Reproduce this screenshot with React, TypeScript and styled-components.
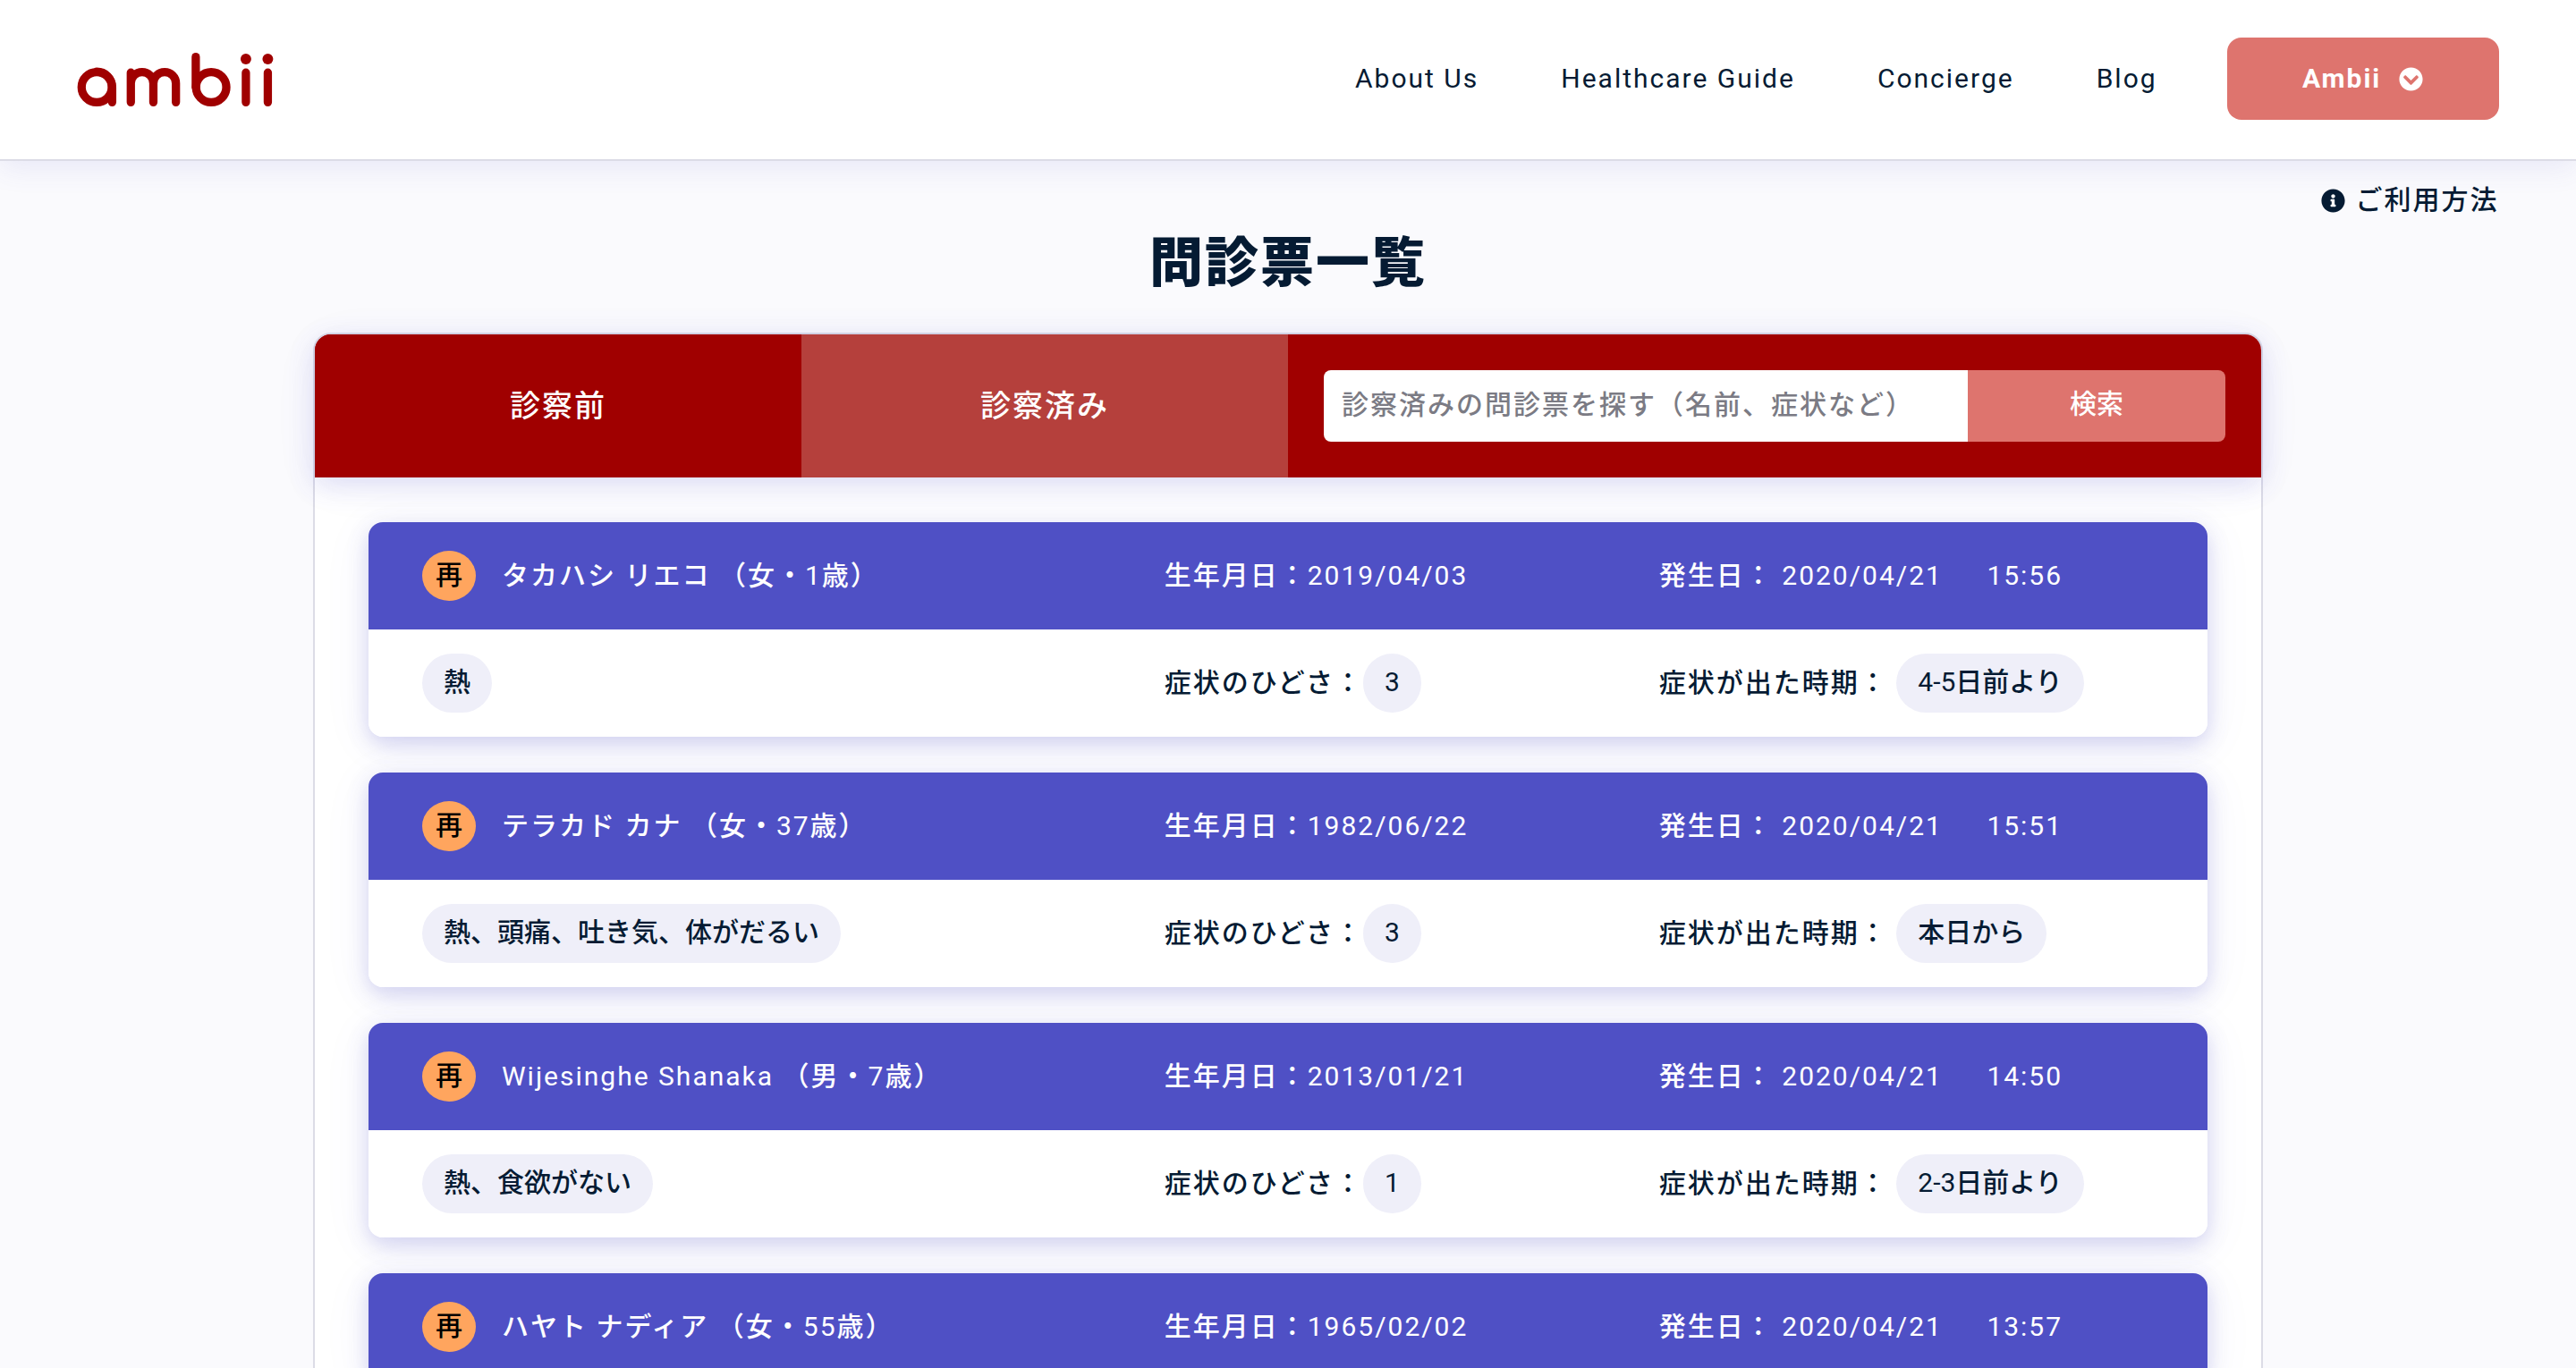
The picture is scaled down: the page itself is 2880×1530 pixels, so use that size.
import React from "react";
import styled, { createGlobalStyle } from "styled-components";
import { FaChevronCircleDown, FaInfoCircle } from "react-icons/fa";

const color = {
  ink: "#051b33",
  crimson: "#a00000",
  crimsonSoft: "#b5403c",
  coral: "#de746e",
  violet: "#4f50c5",
  orange: "#ffa55e",
  lavender: "#efeff9",
  page: "#fafafd",
  line: "#dcdce6",
};

const bodyFont = `Roboto, "Noto Sans CJK JP Medium", "Noto Sans CJK JP", sans-serif`;
const displayFont = `Roboto, "Noto Sans CJK JP", sans-serif`;

const softShadow = "0 8px 30px rgba(79, 80, 197, 0.18), 0 8px 60px rgba(79, 80, 197, 0.04)";
const cardShadow = "0 8px 24px rgba(79, 80, 197, 0.24), 0 8px 60px rgba(79, 80, 197, 0.06)";

const GlobalStyle = createGlobalStyle`
  *, *::before, *::after { box-sizing: border-box; }
  body {
    margin: 0;
    background: ${color.page};
    color: ${color.ink};
    font-family: ${bodyFont};
    font-size: 30px;
    line-height: 44px;
    letter-spacing: 2px;
  }
  button, input { font: inherit; letter-spacing: inherit; }
  a { color: inherit; text-decoration: none; }
`;

const Page = styled.div`
  height: 100vh;
  overflow: hidden;
`;

const Header = styled.header`
  display: flex;
  align-items: center;
  justify-content: space-between;
  height: 180px;
  padding: 0 3%;
  background: #fff;
  border-bottom: 2px solid ${color.line};
  box-shadow: 0 8px 30px rgba(79, 80, 197, 0.1);
`;

const Logo = styled.svg`
  display: block;
  width: 220px;
  height: 60px;
`;

const Nav = styled.nav`
  display: flex;
  align-items: center;
  gap: 92px;
  padding-bottom: 2px;
`;

const AccountButton = styled.button`
  display: flex;
  align-items: center;
  justify-content: center;
  gap: 20px;
  width: 304px;
  height: 92px;
  margin-left: -14px;
  border: 0;
  border-radius: 16px;
  background: ${color.coral};
  color: #fff;
  font-weight: 700;
  svg { width: 27px; height: 27px; }
`;

const Main = styled.main`
  padding: 22px 3% 0;
`;

const HelpLink = styled.a`
  display: flex;
  align-items: center;
  justify-content: flex-end;
  gap: 12px;
  svg { width: 27px; height: 27px; }
`;

const Title = styled.h1`
  margin: 4px 0 0;
  font-family: ${displayFont};
  font-size: 60px;
  line-height: 90px;
  font-weight: 900;
  text-align: center;
`;

const Panel = styled.section`
  max-width: 2180px;
  margin: 32px auto 0;
  border: 2px solid ${color.line};
  border-radius: 20px;
  background: #fff;
`;

const Toolbar = styled.div`
  display: grid;
  grid-template-columns: 1fr 1fr 2fr;
  height: 160px;
  border-radius: 18px 18px 0 0;
  background: ${color.crimson};
  box-shadow: ${softShadow};
`;

const Tab = styled.button<{ $active?: boolean }>`
  border: 0;
  border-radius: ${(p) => (p.$active ? "18px 0 0 0" : "0")};
  background: ${(p) => (p.$active ? color.crimson : color.crimsonSoft)};
  color: #fff;
  font-family: ${displayFont};
  font-size: 34px;
  font-weight: 500;
`;

const Search = styled.form`
  display: grid;
  grid-template-columns: 5fr 2fr;
  padding: 40px;
`;

const SearchInput = styled.input`
  min-width: 0;
  padding: 0 20px 2px;
  border: 0;
  border-radius: 8px 0 0 8px;
  background: #fff;
  color: ${color.ink};
  &::placeholder { color: #7b7b84; opacity: 1; }
`;

const SearchButton = styled.button`
  padding: 0 0 4px;
  border: 0;
  border-radius: 0 8px 8px 0;
  background: ${color.coral};
  color: #fff;
  font-family: ${displayFont};
  font-weight: 500;
  letter-spacing: 0;
`;

const RecordList = styled.ul`
  display: grid;
  gap: 40px;
  margin: 0;
  padding: 50px 60px;
  list-style: none;
`;

const Record = styled.li`
  border-radius: 16px;
  background: #fff;
  box-shadow: ${cardShadow};
`;

const RecordRow = styled.div<{ $head?: boolean }>`
  display: grid;
  grid-template-columns: 3fr 2fr 2fr;
  align-items: center;
  height: 120px;
  padding: 0 60px;
  border-radius: ${(p) => (p.$head ? "16px 16px 0 0" : "0 0 16px 16px")};
  background: ${(p) => (p.$head ? color.violet : "#fff")};
  color: ${(p) => (p.$head ? "#fff" : color.ink)};
`;

const Cell = styled.div`
  display: flex;
  align-items: center;
  white-space: pre;
`;

const Revisit = styled.span`
  width: 60px;
  height: 56px;
  margin-right: 29px;
  border-radius: 50%;
  background: ${color.orange};
  color: #000;
  line-height: 54px;
  letter-spacing: 0;
  text-align: center;
`;

const Pill = styled.span`
  height: 66px;
  padding: 0 24px;
  border-radius: 40px;
  background: ${color.lavender};
  line-height: 64px;
  letter-spacing: 0;
`;

const Time = styled.time`
  margin-left: 40px;
`;

interface Visit {
  name: string;
  birth: string;
  date: string;
  time: string;
  symptoms?: string;
  severity?: number;
  since?: string;
}

const visits: Visit[] = [
  { name: "タカハシ リエコ （女・1歳）", birth: "2019/04/03", date: "2020/04/21", time: "15:56", symptoms: "熱", severity: 3, since: "4-5日前より" },
  { name: "テラカド カナ （女・37歳）", birth: "1982/06/22", date: "2020/04/21", time: "15:51", symptoms: "熱、頭痛、吐き気、体がだるい", severity: 3, since: "本日から" },
  { name: "Wijesinghe Shanaka （男・7歳）", birth: "2013/01/21", date: "2020/04/21", time: "14:50", symptoms: "熱、食欲がない", severity: 1, since: "2-3日前より" },
  { name: "ハヤト ナディア （女・55歳）", birth: "1965/02/02", date: "2020/04/21", time: "13:57" },
];

const links = ["About Us", "Healthcare Guide", "Concierge", "Blog"];

function AmbiiLogo() {
  return (
    <Logo viewBox="78 87 660 181" role="img" aria-label="ambii" fill="none" stroke={color.crimson} strokeWidth="28" strokeLinecap="round">
      <circle cx="143" cy="203" r="51" />
      <path d="M195 254V203A52 52 0 0 0 143 151" />
      <path d="M258 254V154M258 190a38 38 0 0 1 76 0V254M334 190a38 38 0 0 1 76 0V254" />
      <path d="M477 101V203" />
      <circle cx="529" cy="203" r="51" />
      <path d="M646 154V254M720 154V254" />
      <g fill={color.crimson} stroke="none">
        <circle cx="646" cy="108" r="18" />
        <circle cx="720" cy="108" r="18" />
      </g>
    </Logo>
  );
}

function VisitRecord({ visit }: { visit: Visit }) {
  return (
    <Record>
      <RecordRow $head>
        <Cell>
          <Revisit>再</Revisit>
          {visit.name}
        </Cell>
        <Cell>生年月日：{visit.birth}</Cell>
        <Cell>
          {`発生日： ${visit.date} `}
          <Time>{visit.time}</Time>
        </Cell>
      </RecordRow>
      {visit.symptoms && (
        <RecordRow>
          <Cell>
            <Pill>{visit.symptoms}</Pill>
          </Cell>
          <Cell>
            症状のひどさ：<Pill>{visit.severity}</Pill>
          </Cell>
          <Cell>
            {"症状が出た時期： "}
            <Pill>{visit.since}</Pill>
          </Cell>
        </RecordRow>
      )}
    </Record>
  );
}

export default function App() {
  return (
    <Page>
      <GlobalStyle />
      <Header>
        <a href="#top">
          <AmbiiLogo />
        </a>
        <Nav>
          {links.map((label) => (
            <a key={label} href="#top">
              {label}
            </a>
          ))}
          <AccountButton type="button">
            Ambii
            <FaChevronCircleDown aria-hidden />
          </AccountButton>
        </Nav>
      </Header>
      <Main>
        <HelpLink href="#help">
          <FaInfoCircle aria-hidden />
          ご利用方法
        </HelpLink>
        <Title>問診票一覧</Title>
        <Panel>
          <Toolbar>
            <Tab type="button" $active>
              診察前
            </Tab>
            <Tab type="button">診察済み</Tab>
            <Search>
              <SearchInput type="text" aria-label="診察済みの問診票を探す" placeholder="診察済みの問診票を探す（名前、症状など）" />
              <SearchButton type="button">検索</SearchButton>
            </Search>
          </Toolbar>
          <RecordList>
            {visits.map((visit) => (
              <VisitRecord key={visit.name} visit={visit} />
            ))}
          </RecordList>
        </Panel>
      </Main>
    </Page>
  );
}
